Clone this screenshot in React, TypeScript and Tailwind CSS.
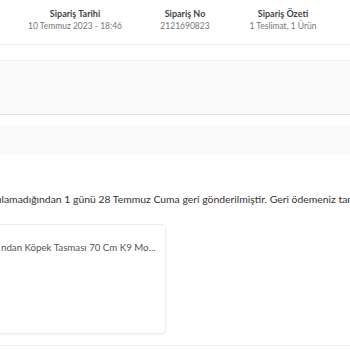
import React from 'react';

const summary = [
  { label: 'Sipariş Tarihi', value: '10 Temmuz 2023 - 18:46', w: 'w-[150px]' },
  { label: 'Sipariş No', value: '2121690823', w: 'w-[70px]' },
  { label: 'Sipariş Özeti', value: '1 Teslimat, 1 Ürün', w: 'w-[126px]' },
];

export default function App() {
  return (
    <div className="w-[350px] h-[350px] overflow-hidden bg-white font-['Lato','Noto_Sans',sans-serif]">
      {/* order summary header */}
      <div className="h-[45px] border-b border-[#ededed] flex items-start pt-[8px]">
        {summary.map((s) => (
          <div key={s.label} className={`${s.w} flex flex-col items-center shrink-0`}>
            <span className="text-[9px] leading-[12px] font-bold text-[#444]">{s.label}</span>
            <span className="text-[8.5px] leading-[13px] text-[#777] whitespace-nowrap">{s.value}</span>
          </div>
        ))}
      </div>

      <div className="h-[15px]" />

      {/* empty status blocks */}
      <div className="h-[55px] bg-[#fafafa] border-t border-[#f0f0f0] border-b border-b-[#e5e5e5]" />
      <div className="h-[10px]" />
      <div className="h-[30px] bg-[#fafafa]" />

      {/* notice */}
      <div className="pt-[36px] ml-[-1px] whitespace-nowrap text-[10.4px] leading-[16px] text-[#333]">
        ılamadığından 1 günü 28 Temmuz Cuma geri gönderilmiştir. Geri ödemeniz tamamlanmıştır.
      </div>

      {/* product card */}
      <div className="mt-[17px] ml-[-20px] w-[186px] h-[110px] rounded-[4px] border border-[#eeeeee] shadow-[0_1px_2px_rgba(0,0,0,0.04)] pl-[20px] pt-[15px]">
        <div className="whitespace-nowrap text-[9.7px] leading-[14px] text-[#555]">
          ndan Köpek Tasması 70 Cm K9 Mo...
        </div>
      </div>

      <div className="mt-[11px] border-t border-[#ececec]" />
    </div>
  );
}
